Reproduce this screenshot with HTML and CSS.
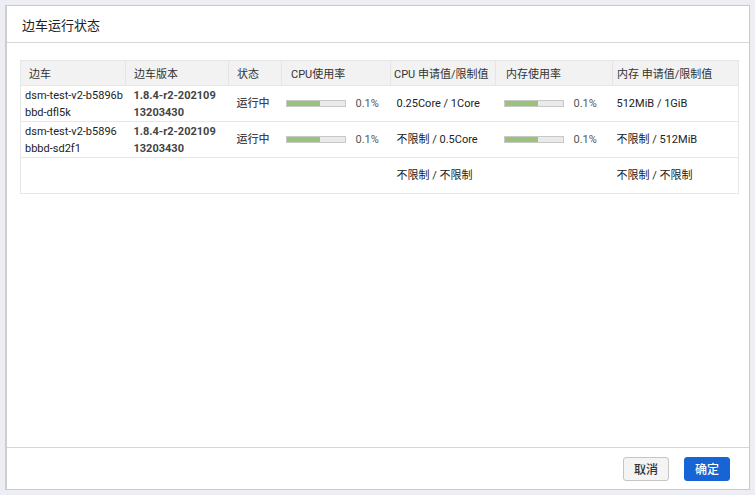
FILE: index.html
```html
<!DOCTYPE html>
<html lang="zh">
<head>
<meta charset="utf-8">
<title>边车运行状态</title>
<link rel="stylesheet" href="styles.css">
</head>
<body>
<div class="dialog">
  <div class="dialog-header">边车运行状态</div>
  <div class="dialog-body">
    <table class="grid">
      <colgroup>
        <col class="c1"><col class="c2"><col class="c3"><col class="c4"><col class="c5"><col class="c6"><col class="c7">
      </colgroup>
      <thead>
        <tr>
          <th>边车</th>
          <th>边车版本</th>
          <th>状态</th>
          <th>CPU使用率</th>
          <th>CPU 申请值/限制值</th>
          <th>内存使用率</th>
          <th>内存 申请值/限制值</th>
        </tr>
      </thead>
      <tbody>
        <tr>
          <td class="name">dsm-test-v2-b5896b<br>bbd-dfl5k</td>
          <td class="ver">1.8.4-r2-202109<br>13203430</td>
          <td class="status">运行中</td>
          <td class="usage cpu"><span class="bar"><span class="fill" style="width:58%"></span></span><span class="pct">0.1%</span></td>
          <td class="val">0.25Core / 1Core</td>
          <td class="usage mem"><span class="bar"><span class="fill" style="width:58%"></span></span><span class="pct">0.1%</span></td>
          <td class="val">512MiB / 1GiB</td>
        </tr>
        <tr>
          <td class="name">dsm-test-v2-b5896<br>bbbd-sd2f1</td>
          <td class="ver">1.8.4-r2-202109<br>13203430</td>
          <td class="status">运行中</td>
          <td class="usage cpu"><span class="bar"><span class="fill" style="width:58%"></span></span><span class="pct">0.1%</span></td>
          <td class="val">不限制 / 0.5Core</td>
          <td class="usage mem"><span class="bar"><span class="fill" style="width:58%"></span></span><span class="pct">0.1%</span></td>
          <td class="val">不限制 / 512MiB</td>
        </tr>
        <tr class="total">
          <td></td>
          <td></td>
          <td></td>
          <td></td>
          <td class="val">不限制 / 不限制</td>
          <td></td>
          <td class="val">不限制 / 不限制</td>
        </tr>
      </tbody>
    </table>
  </div>
  <div class="dialog-footer">
    <button class="btn btn-default">取消</button>
    <button class="btn btn-primary">确定</button>
  </div>
</div>
</body>
</html>
```
FILE: styles.css
```css
html, body {
  margin: 0;
  padding: 0;
}
body {
  background: #eceef3;
  font-family: Roboto, "Noto Sans CJK SC", sans-serif;
  color: #333;
  font-size: 11px;
  width: 755px;
  height: 495px;
  padding: 5px 5px 0 5px;
  box-sizing: border-box;
}
.dialog {
  width: 745px;
  height: 485px;
  box-sizing: border-box;
  background: #fff;
  border: 1px solid #c9c9c9;
  border-left: 2px solid #cdcdcd;
  display: flex;
  flex-direction: column;
}
.dialog-header {
  height: 37px;
  box-sizing: border-box;
  border-bottom: 1px solid #d6d6d6;
  padding-left: 15px;
  display: flex;
  align-items: center;
  font-size: 13px;
  color: #222;
}
.dialog-body {
  flex: 1;
  padding: 17px 10px 0 13px;
}
.grid {
  width: 718px;
  border-collapse: collapse;
  table-layout: fixed;
  border: 1px solid #e6e6e6;
}
.c1 { width: 105px; }
.c2 { width: 103px; }
.c3 { width: 53px; }
.c4 { width: 109px; }
.c5 { width: 105px; }
.c6 { width: 117px; }
.c7 { width: 126px; }
.grid th {
  height: 24px;
  background: #f2f2f2;
  font-weight: normal;
  text-align: left;
  padding: 0 0 0 8px;
  border-right: 1px solid #e4e4e4;
  border-bottom: 1px solid #e6e6e6;
  font-size: 11px;
  color: #333;
  white-space: nowrap;
}
.grid th:nth-child(4) { padding-left: 9px; }
.grid th:nth-child(5) { padding-left: 3px; }
.grid th:nth-child(6) { padding-left: 10px; }
.grid th:nth-child(7) { padding-left: 4px; }
.grid th:last-child { border-right: none; }
.grid td {
  height: 35px;
  padding: 0 0 0 8px;
  border-bottom: 1px solid #e8e8e8;
  line-height: 17px;
  vertical-align: middle;
  white-space: nowrap;
  color: #222;
}
.grid td.name { padding-left: 4px; }
.grid td.ver {
  font-weight: bold;
  color: #444;
}
.grid td.status {
  font-weight: 500;
  color: #444;
}
.grid td.val { padding-left: 6px; }
.grid td:nth-child(7) { padding-left: 4px; }
.grid td.usage.cpu { padding-left: 4px; }
.grid td.usage.mem { padding-left: 8px; }
.bar {
  display: inline-block;
  width: 58px;
  height: 5px;
  border: 1px solid #c8c8c8;
  background: #eaeaea;
  vertical-align: middle;
  position: relative;
  top: -1px;
}
.fill {
  display: block;
  height: 100%;
  background: #9ac27a;
}
.pct {
  margin-left: 10px;
  color: #555;
}
.dialog-footer {
  height: 42px;
  box-sizing: border-box;
  border-top: 1px solid #d6d6d6;
  display: flex;
  justify-content: flex-end;
  align-items: center;
  gap: 15px;
  padding-right: 19px;
}
.btn {
  width: 46px;
  height: 24px;
  border-radius: 3px;
  font-family: Roboto, "Noto Sans CJK SC", sans-serif;
  font-size: 12px;
  font-weight: 500;
  padding: 0;
  cursor: pointer;
}
.btn-default {
  background: #f4f4f5;
  border: 1px solid #c5c5c5;
  color: #333;
}
.btn-primary {
  background: #1764d4;
  border: 1px solid #1764d4;
  color: #fff;
}
```
